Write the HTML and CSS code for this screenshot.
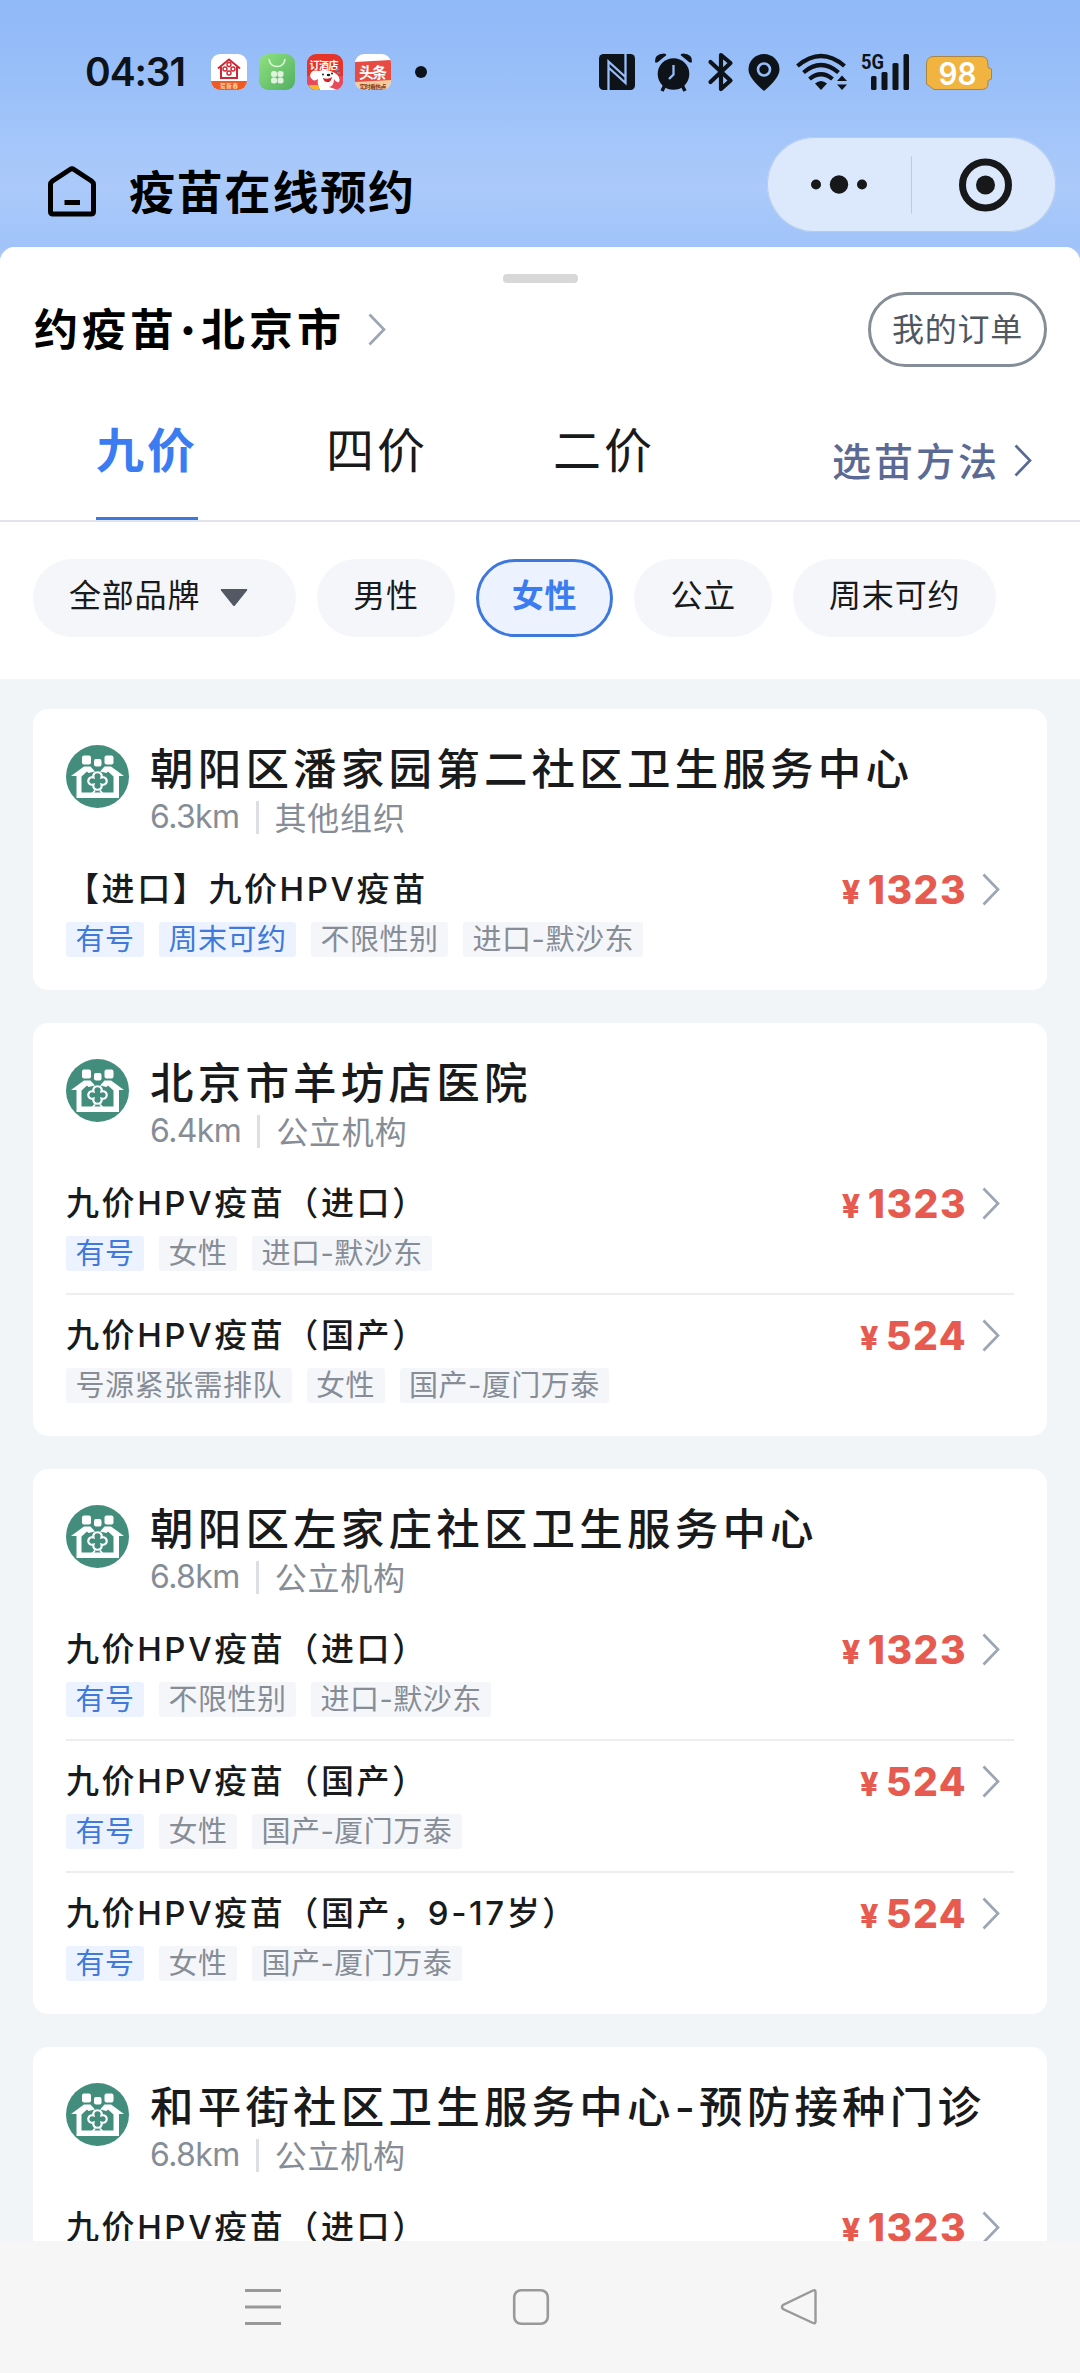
FILE: index.html
```html
<!DOCTYPE html>
<html lang="zh-CN">
<head>
<meta charset="utf-8">
<title>疫苗在线预约</title>
<link rel="stylesheet" href="styles.css">
</head>
<body>
<svg class="defs" width="0" height="0" aria-hidden="true">
  <symbol id="chevron" viewBox="0 0 18 33"><path d="M1.5 1.5 16 16.5 1.5 31.5" fill="none" stroke="currentColor" stroke-width="2.7"/></symbol>
  <symbol id="clinic" viewBox="0 0 63 63">
    <circle cx="31.500" cy="31.500" r="31.500" fill="#438d7c"/>
    <g fill="#fff">
      <rect x="16" y="10.500" width="9" height="9" rx="2"/>
      <rect x="28" y="14" width="7.500" height="7.500" rx="2"/>
      <rect x="38.500" y="10.500" width="9" height="9" rx="2"/>
      <path d="M5 31 18 21.500H24.500L29 26.500 22.500 28 21 26.500 15.500 31.500V47.500H47.500V31.500L42 26.500 40.500 28 34 26.500 38.500 21.500H45L58 31H53V53H10.500V31Z"/>
    </g>
    <path d="M27.500 32.500C25.500 25.500 37.500 25.500 35.500 32.500 42.500 30.500 42.500 41.500 35.500 39.500 37.500 46.500 25.500 46.500 27.500 39.500 20.500 41.500 20.500 30.500 27.500 32.500Z" fill="#438d7c" stroke="#fff" stroke-width="2.200"/>
    <path d="M26 49 29 45.500M37 49 34 45.500" stroke="#fff" stroke-width="1.800"/>
  </symbol>
</svg>

<div class="screen">
  <header class="top">
    <div class="status">
      <span class="clock">04:31</span>
      <div class="apps">
        <svg width="36" height="36" viewBox="0 0 36 36">
          <defs><clipPath id="r"><rect width="36" height="36" rx="9"/></clipPath></defs>
          <g clip-path="url(#r)"><rect width="36" height="36" fill="#fff"/><rect y="27" width="36" height="9" fill="#ee5a24"/>
          <path d="M7 14.500 18 5.500 29 14.500M10 13V24H26V13" fill="none" stroke="#cf2733" stroke-width="2"/>
          <g fill="none" stroke="#cf2733" stroke-width="1.400"><circle cx="18" cy="10.500" r="2"/><circle cx="14" cy="15" r="2"/><circle cx="22" cy="15" r="2"/><circle cx="18" cy="19" r="2"/></g>
          <text x="18" y="34" class="mini mini-cream" font-size="5.500" textLength="18">贺新春</text></g>
        </svg>
        <svg width="36" height="36" viewBox="0 0 36 36">
          <defs><linearGradient id="g" x1="0" y1="0" x2="1" y2="1"><stop offset="0" stop-color="#8fe27f"/><stop offset="1" stop-color="#52ae62"/></linearGradient></defs>
          <rect width="36" height="36" rx="9" fill="url(#g)"/>
          <path d="M10 5Q11 12.500 18 12.500T26 5" fill="none" stroke="#e2f7df" stroke-width="1.600"/>
          <g fill="#dff3dd"><rect x="12" y="17" width="6" height="6" rx="2.500"/><rect x="18.500" y="17" width="6" height="6" rx="2.500"/><rect x="12" y="23.500" width="6" height="6" rx="2.500"/><rect x="18.500" y="23.500" width="6" height="6" rx="2.500"/></g>
        </svg>
        <svg width="36" height="36" viewBox="0 0 36 36">
          <g clip-path="url(#r)"><rect width="36" height="36" fill="#e5352b"/><rect y="22" width="36" height="14" fill="#e84a5c"/>
          <text x="17" y="15" class="mini mini-white" font-size="10" textLength="29">订酒店</text>
          <path d="M3 22Q4 15 12 17 20 14 28 19 34 23 32 28 29 29 27 25 27 32 22 33L31 36H13Q10 30 11 25 6 29 3 22Z" fill="#fff"/>
          <path d="M16 24Q21 26 25 23 24 29 20 28 17 28 16 24Z" fill="#d32229"/><circle cx="16" cy="20.500" r="1" fill="#222"/><circle cx="25" cy="19.500" r="1" fill="#222"/><ellipse cx="21.500" cy="21" rx="1.800" ry="1.200" fill="#222"/>
          <rect x="2" y="31" width="10" height="5" rx="1" fill="#f8b52c"/><path d="M29 16 32 15M30 19 33 19" stroke="#4c9aec" stroke-width="1.500"/></g>
        </svg>
        <svg width="36" height="36" viewBox="0 0 36 36">
          <g clip-path="url(#r)"><rect width="36" height="36" fill="#fff"/><path d="M0 8 36 6V27L0 29Z" fill="#e64c43"/><path d="M0 28 36 26V36H0Z" fill="#f3cd9e"/>
          <text x="18" y="23.500" class="mini mini-white" font-size="15" textLength="28">头条</text>
          <text x="18" y="34.500" class="mini mini-brown" font-size="6" textLength="27">实时看热点</text></g>
        </svg>
      </div>
      <i class="more-dot"></i>
      <svg class="sys" width="410" height="44" viewBox="590 50 410 44">
        <g fill="#0e1319">
          <rect x="599" y="54" width="36" height="36" rx="4.500"/>
          <path d="M608.500 90V61.500L626 77.500M625.500 54V83L609 68" fill="none" stroke="#96bdf8" stroke-width="2.300"/>
          <circle cx="673.500" cy="74" r="15.800"/>
          <path d="M665 85 662 91M682 85 685 91" stroke="#0e1319" stroke-width="3.500"/>
          <path d="M655 62Q654 54 664 53.500Q666 53.500 666.500 55L658 62Q656 63 655 62ZM692 62Q693 54 683 53.500Q681 53.500 680.500 55L689 62Q691 63 692 62Z"/>
          <path d="M673.500 65V74.500L669 79" fill="none" stroke="#96bdf8" stroke-width="2.300"/>
          <path d="M710.500 62 730.500 80.500 721 89V55L730.500 63 710.500 82" fill="none" stroke="#0e1319" stroke-width="4.200" stroke-linejoin="round" stroke-linecap="round"/>
          <path d="M764 54A15.500 15.500 0 0 1 779.500 69.500Q779.500 78 764 91Q748.500 78 748.500 69.500A15.500 15.500 0 0 1 764 54Z"/>
          <circle cx="764" cy="69.500" r="6" fill="none" stroke="#96bdf8" stroke-width="2.600"/>
          <g fill="none" stroke="#0e1319" stroke-width="4.200"><path d="M797.500 66Q821 46 844.500 66M803.500 72.500Q821 57.500 838.500 72.500M809.500 79Q821 69.500 832.500 79"/></g>
          <path d="M815 83.500Q821 78.500 827 83.500L821 90ZM837 81 842 75.500 847 81ZM837 84.500 842 90 847 84.500Z"/>
          <text x="861" y="69" class="net" textLength="23" lengthAdjust="spacingAndGlyphs">5G</text>
          <rect x="871" y="76" width="5.500" height="14" rx="1.500"/><rect x="881.500" y="72" width="6" height="18" rx="1.500"/><rect x="892.500" y="63" width="6" height="27" rx="1.500"/><rect x="903.500" y="54" width="5.500" height="36" rx="1.500"/>
        </g>
        <path d="M934 56.500H981Q988 56.500 988 64V67.500L991.500 69V79L988 80.500V84Q988 89.500 981 89.500H934L926.500 84V64Q926.500 56.500 934 56.500Z" fill="#f2b441" stroke="#a98545" stroke-linejoin="round"/>
        <text x="957.500" y="84.500" class="pct" text-anchor="middle" textLength="38" lengthAdjust="spacingAndGlyphs">98</text>
      </svg>
    </div>
    <div class="titlebar">
      <svg class="home" width="50" height="52" viewBox="0 0 50 52"><path d="M3.500 18.500Q3.500 16.500 5.500 15L23 3.500Q25 2 27 3.500L44.500 15Q46.500 16.500 46.500 18.500V45.500Q46.500 48 44 48H6Q3.500 48 3.500 45.500Z" fill="none" stroke="#000" stroke-width="5"/><path d="M17.500 36.500H33" stroke="#000" stroke-width="5"/></svg>
      <h1>疫苗在线预约</h1>
      <div class="capsule">
        <svg width="288" height="95" viewBox="0 0 288 95"><g fill="#171819"><circle cx="49" cy="47.500" r="5"/><circle cx="72" cy="47.500" r="9.200"/><circle cx="95" cy="47.500" r="5"/><circle cx="218.500" cy="48" r="9.500"/></g><circle cx="218.500" cy="48" r="23" fill="none" stroke="#171819" stroke-width="7"/><path d="M144.500 19.500V76.500" stroke="#bccadf"/></svg>
      </div>
    </div>
  </header>

  <main class="sheet">
    <div class="panel">
      <i class="handle"></i>
      <div class="place">
        <h2>约疫苗<span class="mid">·</span>北京市</h2>
        <svg class="chev" width="18" height="33"><use href="#chevron"/></svg>
        <button class="orders">我的订单</button>
      </div>
      <nav class="tabs">
        <a class="tab on">九价</a><a class="tab">四价</a><a class="tab">二价</a>
        <a class="guide"><span>选苗方法</span><svg width="18" height="33"><use href="#chevron"/></svg></a>
      </nav>
      <div class="filters">
        <span class="chip">全部品牌<svg width="28" height="18" viewBox="0 0 28 18"><path d="M1.500 0H26.500Q28 0 27 1.500L15 16.500Q14 17.500 13 16.500L1 1.500Q0 0 1.500 0Z" fill="#535962"/></svg></span>
        <span class="chip">男性</span>
        <span class="chip on">女性</span>
        <span class="chip">公立</span>
        <span class="chip">周末可约</span>
      </div>
    </div>

    <div class="list">
      <section class="card">
        <div class="head"><svg class="logo"><use href="#clinic"/></svg><div><h3>朝阳区潘家园第二社区卫生服务中心</h3><p><span class="km">6.3km</span><i></i><span class="org">其他组织</span></p></div></div>
        <div class="row">
          <div class="line"><span class="name">【进口】九价HPV疫苗</span><span class="price"><small>¥</small>1323</span><svg class="chev" width="18" height="33"><use href="#chevron"/></svg></div>
          <div class="tags"><b>有号</b><b>周末可约</b><span>不限性别</span><span>进口-默沙东</span></div>
        </div>
      </section>

      <section class="card">
        <div class="head"><svg class="logo"><use href="#clinic"/></svg><div><h3>北京市羊坊店医院</h3><p><span class="km">6.4km</span><i></i><span class="org">公立机构</span></p></div></div>
        <div class="row">
          <div class="line"><span class="name">九价HPV疫苗（进口）</span><span class="price"><small>¥</small>1323</span><svg class="chev" width="18" height="33"><use href="#chevron"/></svg></div>
          <div class="tags"><b>有号</b><span>女性</span><span>进口-默沙东</span></div>
        </div>
        <div class="row">
          <div class="line"><span class="name">九价HPV疫苗（国产）</span><span class="price"><small>¥</small>524</span><svg class="chev" width="18" height="33"><use href="#chevron"/></svg></div>
          <div class="tags"><span>号源紧张需排队</span><span>女性</span><span>国产-厦门万泰</span></div>
        </div>
      </section>

      <section class="card">
        <div class="head"><svg class="logo"><use href="#clinic"/></svg><div><h3>朝阳区左家庄社区卫生服务中心</h3><p><span class="km">6.8km</span><i></i><span class="org">公立机构</span></p></div></div>
        <div class="row">
          <div class="line"><span class="name">九价HPV疫苗（进口）</span><span class="price"><small>¥</small>1323</span><svg class="chev" width="18" height="33"><use href="#chevron"/></svg></div>
          <div class="tags"><b>有号</b><span>不限性别</span><span>进口-默沙东</span></div>
        </div>
        <div class="row">
          <div class="line"><span class="name">九价HPV疫苗（国产）</span><span class="price"><small>¥</small>524</span><svg class="chev" width="18" height="33"><use href="#chevron"/></svg></div>
          <div class="tags"><b>有号</b><span>女性</span><span>国产-厦门万泰</span></div>
        </div>
        <div class="row">
          <div class="line"><span class="name">九价HPV疫苗（国产，9-17岁）</span><span class="price"><small>¥</small>524</span><svg class="chev" width="18" height="33"><use href="#chevron"/></svg></div>
          <div class="tags"><b>有号</b><span>女性</span><span>国产-厦门万泰</span></div>
        </div>
      </section>

      <section class="card">
        <div class="head"><svg class="logo"><use href="#clinic"/></svg><div><h3>和平街社区卫生服务中心-预防接种门诊</h3><p><span class="km">6.8km</span><i></i><span class="org">公立机构</span></p></div></div>
        <div class="row">
          <div class="line"><span class="name">九价HPV疫苗（进口）</span><span class="price"><small>¥</small>1323</span><svg class="chev" width="18" height="33"><use href="#chevron"/></svg></div>
        </div>
      </section>
    </div>
  </main>

  <footer class="sysnav">
    <svg width="38" height="38" viewBox="0 0 38 38"><path d="M1 2.500H37M1 19H37M1 35.500H37" stroke="#999" stroke-width="3"/></svg>
    <svg width="38" height="38" viewBox="0 0 38 38"><rect x="2.200" y="2.200" width="33.600" height="33.600" rx="7" fill="none" stroke="#999" stroke-width="2.600"/></svg>
    <svg width="38" height="38" viewBox="0 0 38 38"><path d="M33 2.500 3 17Q1 19 3 21L33 35Q35.500 36 35.500 33.500V4Q35.500 1.500 33 2.500Z" fill="none" stroke="#999" stroke-width="2.400"/></svg>
  </footer>
</div>
</body>
</html>
```
FILE: styles.css
```css
* { box-sizing: border-box; margin: 0; padding: 0; }
body {
  width: 1080px;
  font-family: Inter, "Noto Sans CJK SC", sans-serif;
  font-size: 32px;
  color: #191a1b;
  background: #f1f5f8;
}
i { font-style: normal; display: block; }
svg { display: block; flex: none; }
.defs { position: absolute; }
.screen { height: 2373px; display: flex; flex-direction: column; overflow: hidden; }

.top {
  flex: none;
  height: 262px;
  background: linear-gradient(#90b9f8 0, #9bc0f9 90px, #abcafa 185px, #a0c3f9 247px, #b4cff9 262px);
}
.status { display: flex; align-items: center; height: 100px; padding: 44px 0 0 85px; }
.clock { width: 126px; font-size: 39px; line-height: 56px; font-weight: 600; letter-spacing: -1.1px; color: #0e1319; }
.apps { display: flex; gap: 12px; }
.mini { text-anchor: middle; font-family: "Noto Sans CJK SC", sans-serif; font-weight: 700; }
.mini-white { fill: #fff; }
.mini-cream { fill: #ffd9a8; }
.mini-brown { fill: #8a3a1c; }
.more-dot { width: 12px; height: 12px; margin-left: 24px; border-radius: 50%; background: #0e1319; }
.sys { margin-left: 163px; }
.net { font: 700 21px Roboto, sans-serif; }
.pct { font: 600 31px Inter, sans-serif; fill: #fff; }

.titlebar { display: flex; align-items: center; height: 168px; padding: 0 24px 0 47px; }
.home { margin-top: 15px; }
.titlebar h1 { margin: 16px 0 0 32px; font-size: 46px; line-height: 60px; font-weight: 700; letter-spacing: 1.8px; color: #000; }
.capsule { width: 289px; height: 95px; margin-left: auto; border-radius: 48px; background: #dce8fc; box-shadow: inset 0 0 0 1px #b6ccee; }

.sheet { flex: 1; min-height: 0; margin-top: -15px; overflow: hidden; border-radius: 15px 15px 0 0; background: #f1f5f8; }
.panel { height: 432px; padding-top: 27px; background: #fff; }
.handle { width: 75px; height: 9px; margin: 0 auto; border-radius: 4px; background: #d8d8d8; }
.place { display: flex; align-items: center; height: 75px; margin-top: 9px; padding: 0 33px 0 34px; color: #000; }
.place h2 { font-size: 44px; line-height: 60px; letter-spacing: 4px; font-weight: 700; }
.place .mid { display: inline-block; width: 23px; text-indent: -3px; letter-spacing: 0; text-align: center; font-weight: 900; }
.chev { color: #9ca6b3; }
.place .chev { margin-left: 23px; }
.orders {
  width: 179px; height: 75px; margin-left: auto; padding-bottom: 5px;
  border: 3px solid #858d96; border-radius: 38px; background: #fff;
  font: 400 32px/60px "Noto Sans CJK SC", sans-serif; letter-spacing: 0.7px; color: #4f5761; white-space: nowrap;
}
.tabs { display: flex; height: 155px; padding: 0 48px 0 96px; border-bottom: 2px solid #e1e4eb; }
.tab { height: 153px; margin-right: 125px; padding: 49px 0 0; border-bottom: 3px solid transparent; font-size: 48px; line-height: 70px; letter-spacing: 3px; }
.tab.on { margin-right: 128px; border-color: #3f78dc; color: #3c7cf1; font-weight: 700; }
.guide { display: flex; align-items: center; height: 60px; margin: 63px 0 0 auto; gap: 14px; font-size: 39px; letter-spacing: 3px; font-weight: 500; color: #5b6a94; }
.guide span { padding-bottom: 3px; }
.filters { display: flex; gap: 21px; padding: 37px 33px 0; }
.chip { display: flex; align-items: center; gap: 20px; height: 78px; padding: 0 36px; border-radius: 39px; background: #f5f6fa; line-height: 74px; padding-bottom: 4px; letter-spacing: 0.8px; }
.chip svg { margin-top: 4px; }
.chip:first-child { padding-right: 48px; }
.chip.on { border: 3px solid #3f78dc; padding: 0 33px 4px; background: #ecf3fe; color: #3c7cf1; font-weight: 700; }

.list { display: flex; flex-direction: column; gap: 33px; padding: 30px 33px 0; }
.card { flex: none; padding: 0 33px 11px; border-radius: 15px; background: #fff; }
.head { display: flex; gap: 21px; height: 138px; padding-top: 36px; }
.logo { width: 63px; height: 63px; }
.head h3 { height: 48px; font-size: 43.5px; line-height: 48px; font-weight: 500; letter-spacing: 4.2px; white-space: nowrap; }
.head p { display: flex; align-items: center; height: 48px; letter-spacing: 0.8px; color: #868d96; }
.head p i { width: 3px; height: 33px; margin: 0 16px; background: #dcdfe4; }
.head p span { padding-bottom: 3px; }
.head p .km { padding-bottom: 1px; letter-spacing: -0.6px; }
.row { height: 132px; }
.row + .row { border-top: 2px solid #eceef0; }
.line { display: flex; align-items: center; height: 75px; padding: 9px 14px 0 0; }
.row + .row .line { height: 73px; padding-top: 7px; }
.name { flex: 1; font-size: 33px; line-height: 50px; font-weight: 500; letter-spacing: 2.6px; }
.price { margin-right: 15px; font-size: 39px; font-weight: 800; letter-spacing: 1.5px; color: #e65a4f; }
.price small { margin-right: 6px; font-size: 32px; }
.tags { display: flex; gap: 15px; font-size: 29px; line-height: 35px; letter-spacing: 0.5px; }
.tags > * { height: 35px; padding: 0 9.500px; border-radius: 3px; background: #f5f6fa; color: #868d96; font-weight: 400; }
.tags b { background: #ecf3fe; color: #4078dc; }

.sysnav { flex: none; display: flex; gap: 230px; height: 132px; padding: 47px 0 0 244px; background: #f6f6f6; }
```
